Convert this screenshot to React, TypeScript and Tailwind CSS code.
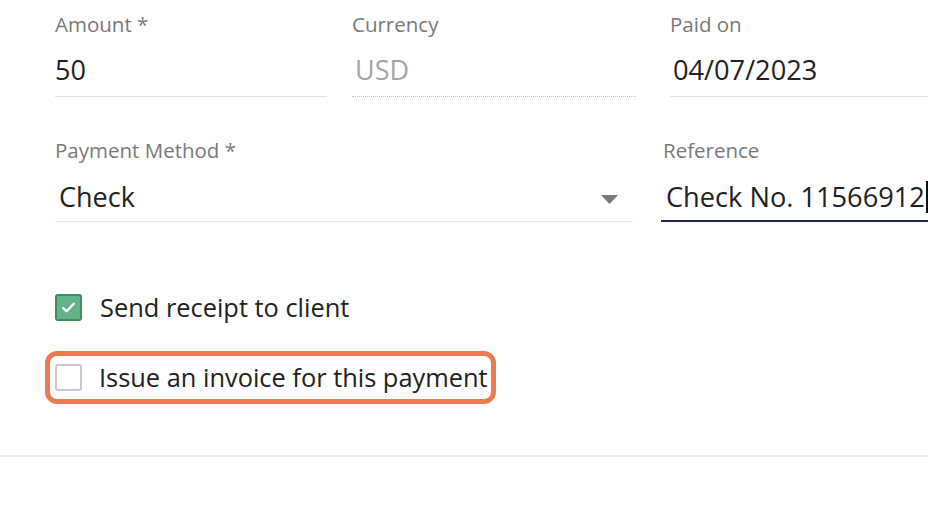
export default function App() {
  return (
    <div className="relative h-[526px] w-[928px] overflow-hidden bg-white font-['Open_Sans',sans-serif]">
      {/* Row 1 */}
      <div className="flex pl-[55px]">
        <div className="w-[272px] shrink-0 border-b border-[#e2e2e2] pb-[8px] pt-[10px]">
          <div className="h-[28px] text-[20.5px] leading-[28px] text-[#7a7a7a]">Amount *</div>
          <div className="mt-[14px] text-[27px] leading-[36px] text-[#222]">50</div>
        </div>
        <div className="ml-[25px] w-[284px] shrink-0 border-b border-dotted border-[#c4c4c4] pb-[8px] pt-[10px]">
          <div className="h-[28px] text-[20.5px] leading-[28px] text-[#7a7a7a]">Currency</div>
          <div className="mt-[14px] pl-[3px] text-[27px] leading-[36px] text-[#a5a5a5]">USD</div>
        </div>
        <div className="ml-[34px] w-[300px] shrink-0 border-b border-[#e2e2e2] pb-[8px] pt-[10px]">
          <div className="h-[28px] text-[20.5px] leading-[28px] text-[#7a7a7a]">Paid on</div>
          <div className="mt-[14px] pl-[3px] text-[27.2px] leading-[36px] text-[#222]">04/07/2023</div>
        </div>
      </div>

      {/* Row 2 */}
      <div className="mt-[39px] flex pl-[55px]">
        <div className="relative w-[578px] shrink-0 border-b border-[#e2e2e2] pb-[6px]">
          <div className="h-[28px] text-[20.5px] leading-[28px] text-[#7a7a7a]">Payment Method *</div>
          <div className="mt-[15px] pl-[4px] text-[27px] leading-[36px] text-[#222]">Check</div>
          <svg className="absolute left-[546px] top-[59px] h-[9px] w-[17px]" viewBox="0 0 17 9">
            <path d="M0 0h17L8.5 9z" fill="#7b7b7b" />
          </svg>
        </div>
        <div className="ml-[28px] w-[320px] shrink-0 border-b-2 border-[#232550] pb-[5px]">
          <div className="h-[28px] pl-[2px] text-[20.5px] leading-[28px] text-[#7a7a7a]">Reference</div>
          <div className="mt-[15px] flex items-center pl-[5px] text-[27.2px] leading-[36px] text-[#222]">
            Check No. 11566912
            <span className="ml-[1px] h-[32px] w-[2px] bg-[#111]" />
          </div>
        </div>
      </div>

      {/* Checkboxes */}
      <div className="mt-[72px] flex items-center gap-[18px] pl-[55px]">
        <div className="flex h-[27px] w-[27px] items-center justify-center rounded-[3px] border-2 border-[#3f8d62] bg-[#62b38a]">
          <svg className="h-[17px] w-[17px]" viewBox="0 0 16 16" fill="none">
            <path d="M3 8.5l3.2 3L13 4.5" stroke="white" strokeWidth={2.2} strokeLinecap="round" strokeLinejoin="round" />
          </svg>
        </div>
        <span className="text-[25.4px] leading-[27px] text-[#222]">Send receipt to client</span>
      </div>

      <div className="relative mt-[43px] flex items-center gap-[17px] pl-[55px]">
        <div className="h-[27px] w-[27px] rounded-[3px] border-2 border-[#c9c9c9] bg-white" />
        <span className="text-[25.4px] leading-[27px] text-[#222]">Issue an invoice for this payment</span>
        <div className="pointer-events-none absolute left-[45px] top-[-13px] h-[53px] w-[451px] rounded-[12px] border-[5px] border-[#ec7c4f]" />
      </div>

      {/* Footer divider */}
      <div className="mt-[64px] h-[2px] w-full bg-[#ebebeb]" />
    </div>
  );
}
